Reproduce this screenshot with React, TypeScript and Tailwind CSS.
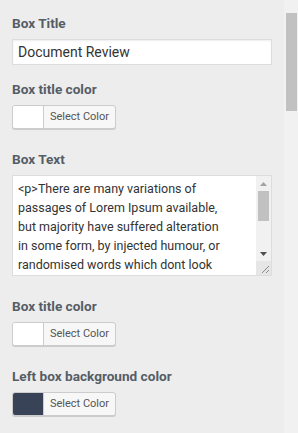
type ColorButtonProps = {
  swatch: string;
};

function ColorButton({ swatch }: ColorButtonProps) {
  return (
    <div className="mt-2 flex h-[24px] w-[104px] overflow-hidden rounded-[3px] border border-[#cccccc] bg-[#f7f7f7] shadow-[0_1px_0_#cccccc]">
      <span
        className={
          swatch === "dark"
            ? "h-full w-[31px] border-r border-[#cccccc] bg-[#394357]"
            : "h-full w-[31px] border-r border-[#cccccc] bg-white"
        }
      />
      <span className="flex flex-1 items-center justify-center text-[11px] text-[#555555]">
        Select Color
      </span>
    </div>
  );
}

function Label({ text, top }: { text: string; top: string }) {
  return (
    <div className={`${top} h-4 text-[13.6px] font-bold leading-4 text-[#555d66]`}>
      {text}
    </div>
  );
}

const boxText = [
  "<p>There are many variations of",
  "passages of Lorem Ipsum available,",
  "but majority have suffered alteration",
  "in some form, by injected humour, or",
  "randomised words which dont look",
];

export default function App() {
  return (
    <div
      className="flex h-[433px] w-[298px] overflow-hidden bg-[#ededed]"
      style={{ fontFamily: "Roboto, 'Liberation Sans', sans-serif" }}
    >
      <div className="flex-1 px-3">
        <Label text="Box Title" top="mt-[15px]" />
        <div className="mt-2 flex h-[26px] items-center border border-[#dddddd] bg-white px-[5px] text-[14px] text-[#333333] shadow-[inset_0_1px_2px_rgba(0,0,0,0.07)]">
          Document Review
        </div>

        <Label text="Box title color" top="mt-[16px]" />
        <ColorButton swatch="light" />

        <Label text="Box Text" top="mt-[22px]" />
        <div className="mt-2 flex h-[101px] border border-[#dddddd] bg-white">
          <div className="flex-1 overflow-hidden pl-[5px] pt-[3px] text-[12.5px] leading-[19px] text-[#333333]">
            {boxText.map((line) => (
              <div key={line} className="whitespace-nowrap">
                {line}
              </div>
            ))}
          </div>
          {/* textarea scrollbar */}
          <div className="flex w-[15px] flex-col bg-[#f1f1f1]">
            <div className="flex h-[15px] items-center justify-center">
              <svg width="7" height="4" viewBox="0 0 7 4">
                <path d="M0 4 L3.5 0 L7 4 Z" fill="#a3a3a3" />
              </svg>
            </div>
            <div className="mx-[2px] h-[30px] bg-[#c1c1c1]" />
            <div className="flex-1" />
            <div className="flex h-[15px] items-center justify-center">
              <svg width="7" height="4" viewBox="0 0 7 4">
                <path d="M0 0 L7 0 L3.5 4 Z" fill="#505050" />
              </svg>
            </div>
            <div className="relative h-[14px] bg-[#e6e6e6]">
              <svg className="absolute bottom-[1px] right-[1px]" width="9" height="9" viewBox="0 0 9 9">
                <path d="M1 8 L8 1 M5 8 L8 5" stroke="#8a8a8a" strokeWidth="1" />
              </svg>
            </div>
          </div>
        </div>

        <Label text="Box title color" top="mt-[22px]" />
        <ColorButton swatch="light" />

        <Label text="Left box background color" top="mt-[22px]" />
        <ColorButton swatch="dark" />
      </div>

      {/* page scrollbar */}
      <div className="w-[14px] bg-[#f1f1f1]">
        <div className="ml-[2px] mt-[13px] h-[98px] w-[11px] bg-[#c1c1c1]" />
      </div>
    </div>
  );
}
